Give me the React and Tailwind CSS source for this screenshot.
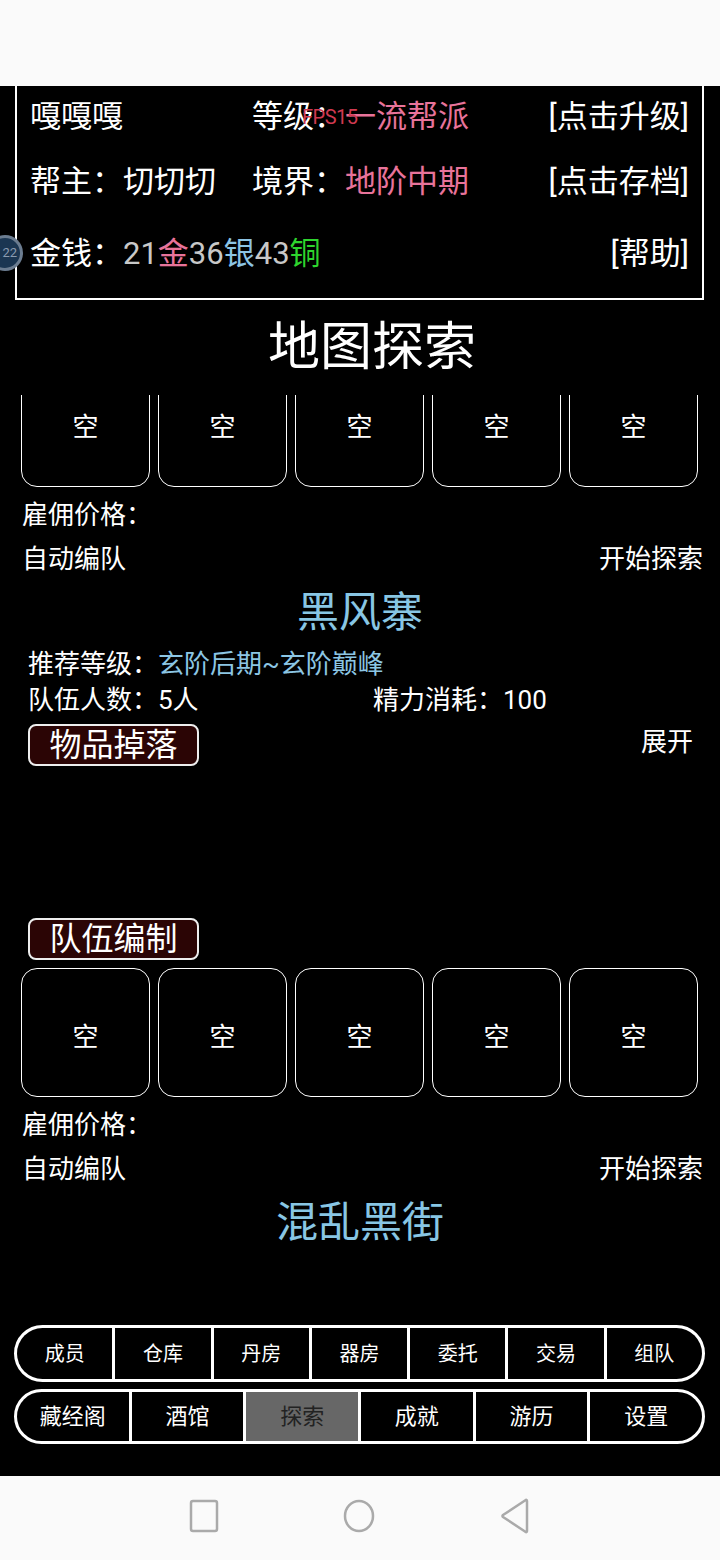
import React from 'react';

const FONT = { fontFamily: 'Roboto, "Noto Sans CJK SC", sans-serif' };

function Slots() {
  return (
    <div className="flex gap-[8px] pl-[21px]">
      {[0, 1, 2, 3, 4].map((i) => (
        <div
          key={i}
          className="w-[129px] h-[129px] shrink-0 border border-white rounded-[16px] flex items-center justify-center pt-[10px] text-[26px] text-white"
        >
          空
        </div>
      ))}
    </div>
  );
}

function TeamFooter({ name }) {
  return (
    <>
      <div className="h-[56px] flex items-center pl-[22px] text-[26px] text-white">雇佣价格：</div>
      <div className="h-[32px] flex items-center justify-between pl-[22px] pr-[17px] text-[26px] text-white">
        <span>自动编队</span>
        <span>开始探索</span>
      </div>
      <div className="h-[74px] flex items-center justify-center text-[42px] text-[#88c6e4]">{name}</div>
    </>
  );
}

function TagButton({ children }) {
  return (
    <div className="w-[171px] h-[42px] border-2 border-[#eeeeee] rounded-[8px] bg-[#2b0505] flex items-center justify-center text-[32px] text-white leading-none">
      {children}
    </div>
  );
}

const topTabs = ['成员', '仓库', '丹房', '器房', '委托', '交易', '组队'];
const bottomTabs = ['藏经阁', '酒馆', '探索', '成就', '游历', '设置'];

export default function App() {
  return (
    <div className="w-[720px] h-[1560px] bg-black flex flex-col overflow-hidden relative" style={FONT}>
      {/* status bar */}
      <div className="h-[86px] bg-[#fafafa] shrink-0" />

      {/* player header */}
      <div className="mx-[15px] mr-[16px] border-2 border-white border-t-0 text-[31px] text-white leading-none pl-[13px] pr-[13px]">
        <div className="h-[60px] flex items-center">
          <span className="w-[222px]">嘎嘎嘎</span>
          <span className="flex-1">
            等级：<span className="text-[#e8739a]">一流帮派</span>
          </span>
          <span>[点击升级]</span>
        </div>
        <div className="h-[70px] flex items-center">
          <span className="w-[222px]">帮主：切切切</span>
          <span className="flex-1">
            境界：<span className="text-[#e8739a]">地阶中期</span>
          </span>
          <span>[点击存档]</span>
        </div>
        <div className="h-[74px] flex items-center">
          <span className="flex-1">
            金钱：<span className="text-[#c8c8c8]">21</span>
            <span className="text-[#e8739a]">金</span>
            <span className="text-[#c8c8c8]">36</span>
            <span className="text-[#8cc4e4]">银</span>
            <span className="text-[#c8c8c8]">43</span>
            <span className="text-[#2ed52e]">铜</span>
          </span>
          <span>[帮助]</span>
        </div>
        <div className="h-[8px]" />
      </div>

      {/* fps overlay */}
      <div className="absolute left-[302px] top-[107px] text-[20px] text-[#d03a50] leading-none tracking-[-0.5px]">FPS15</div>

      {/* floating ball */}
      <div className="absolute left-[-13px] top-[235px] w-[36px] h-[36px] rounded-full bg-[#1b3652] border-[3px] border-[#7f8fa0]/80 flex items-center justify-end pr-[3px] text-[13px] text-[#8a9bb0]">
        22
      </div>

      {/* title */}
      <div className="h-[95px] shrink-0 flex items-center justify-center pl-[24px] text-[52px] text-white leading-none">
        地图探索
      </div>

      {/* list */}
      <div className="h-[915px] shrink-0 overflow-hidden">
        <div className="mt-[-37px]">
          <Slots />
          <TeamFooter name="黑风寨" />
          <div className="h-[30px] flex items-center pl-[28px] text-[26px] text-white">
            推荐等级：<span className="text-[#8cc6e4]">玄阶后期~玄阶巅峰</span>
          </div>
          <div className="h-[42px] flex items-center pl-[28px] text-[26px] text-white">
            <span className="w-[345px]">队伍人数：5人</span>
            <span>精力消耗：100</span>
          </div>
          <div className="mt-[3px] h-[42px] flex items-center justify-between pl-[28px] pr-[27px]">
            <TagButton>物品掉落</TagButton>
            <span className="text-[26px] text-white leading-none mb-[6px]">展开</span>
          </div>
          <div className="mt-[152px] pl-[28px]">
            <TagButton>队伍编制</TagButton>
          </div>
          <div className="mt-[8px]">
            <Slots />
          </div>
          <TeamFooter name="混乱黑街" />
        </div>
      </div>

      {/* bottom menus */}
      <div className="shrink-0 pt-[15px] pb-[32px] pl-[14px] pr-[15px] flex flex-col gap-[7px]">
        <div className="h-[57px] rounded-full border-[3px] border-white bg-white overflow-hidden flex gap-[3px]">
          {topTabs.map((t) => (
            <div key={t} className="flex-1 bg-black flex items-center justify-center text-[20px] text-white">
              {t}
            </div>
          ))}
        </div>
        <div className="h-[55px] rounded-full border-[3px] border-white bg-white overflow-hidden flex gap-[3px]">
          {bottomTabs.map((t) => (
            <div
              key={t}
              className={
                t === '探索'
                  ? 'flex-1 bg-[#676767] flex items-center justify-center text-[22px] text-[#222222]'
                  : 'flex-1 bg-black flex items-center justify-center text-[22px] text-white'
              }
            >
              {t}
            </div>
          ))}
        </div>
      </div>

      {/* android nav bar */}
      <div className="flex-1 bg-[#fafafa] flex items-center justify-center gap-[124px] pb-[4px]">
        <svg width="30" height="34" viewBox="0 0 30 34">
          <rect x="2" y="2" width="26" height="30" rx="2" fill="none" stroke="#aaaaaa" strokeWidth="2.5" />
        </svg>
        <svg width="32" height="34" viewBox="0 0 32 34">
          <ellipse cx="16" cy="17" rx="14" ry="15" fill="none" stroke="#aaaaaa" strokeWidth="2.5" />
        </svg>
        <svg width="32" height="36" viewBox="0 0 32 36">
          <path d="M28 3 L28 33 Q28 35 26 33.5 L4 19 Q3 18 4 17 L26 2.5 Q28 1 28 3 Z" fill="none" stroke="#aaaaaa" strokeWidth="2.5" strokeLinejoin="round" />
        </svg>
      </div>
    </div>
  );
}
